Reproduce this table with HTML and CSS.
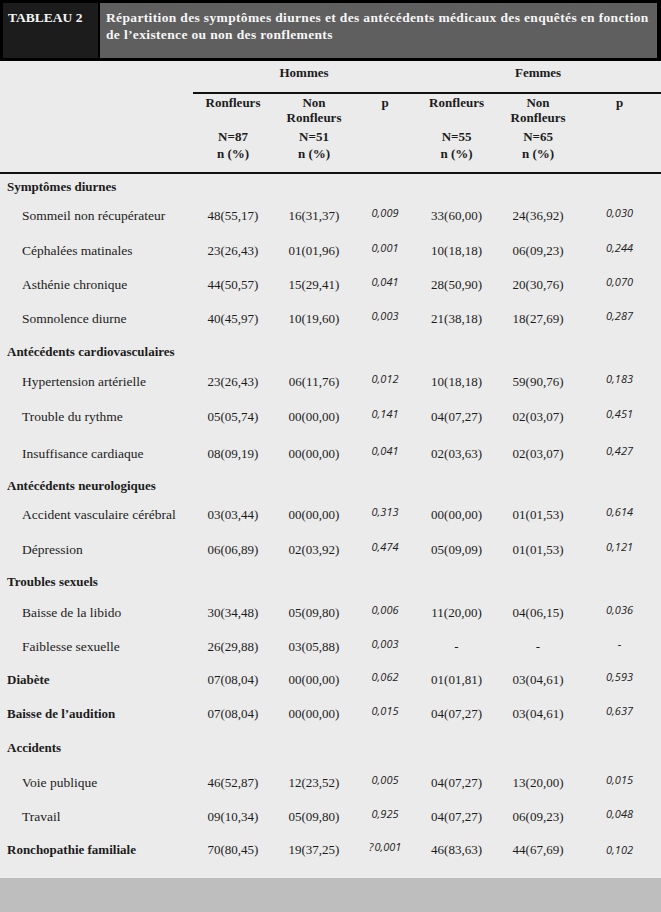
FILE: index.html
```html
<!DOCTYPE html>
<html lang="fr">
<head>
<meta charset="utf-8">
<title>Tableau 2</title>
<link rel="stylesheet" href="styles.css">
</head>
<body>
<div class="page">
  <header class="caption">
    <div class="tag">TABLEAU 2</div>
    <div class="title">Répartition des symptômes diurnes et des antécédents médicaux des enquêtés en fonction<br>de l’existence ou non des ronflements</div>
  </header>

  <table class="data">
    <colgroup>
      <col class="c-label"><col class="c-a"><col class="c-b"><col class="c-p"><col class="c-d"><col class="c-e"><col class="c-p2">
    </colgroup>
    <thead>
      <tr class="h-group">
        <th></th>
        <th colspan="3" class="grp">Hommes</th>
        <th colspan="3" class="grp">Femmes</th>
      </tr>
      <tr class="h-cols">
        <th></th>
        <th><div class="nm">Ronfleurs</div><div class="nn">N=87</div><div class="np">n (%)</div></th>
        <th><div class="nm">Non<br>Ronfleurs</div><div class="nn">N=51</div><div class="np">n (%)</div></th>
        <th><div class="nm">p</div></th>
        <th><div class="nm">Ronfleurs</div><div class="nn">N=55</div><div class="np">n (%)</div></th>
        <th><div class="nm">Non<br>Ronfleurs</div><div class="nn">N=65</div><div class="np">n (%)</div></th>
        <th><div class="nm">p</div></th>
      </tr>
    </thead>
    <tbody>
      <tr class="cat g4"><td colspan="7">Symptômes diurnes</td></tr>
      <tr class="g12"><td>Sommeil non récupérateur</td><td>48(55,17)</td><td>16(31,37)</td><td><span class="pv">0,009</span></td><td>33(60,00)</td><td>24(36,92)</td><td><span class="pv">0,030</span></td></tr>
      <tr class="g18"><td>Céphalées matinales</td><td>23(26,43)</td><td>01(01,96)</td><td><span class="pv">0,001</span></td><td>10(18,18)</td><td>06(09,23)</td><td><span class="pv">0,244</span></td></tr>
      <tr class="g17"><td>Asthénie chronique</td><td>44(50,57)</td><td>15(29,41)</td><td><span class="pv">0,041</span></td><td>28(50,90)</td><td>20(30,76)</td><td><span class="pv">0,070</span></td></tr>
      <tr class="g17"><td>Somnolence diurne</td><td>40(45,97)</td><td>10(19,60)</td><td><span class="pv">0,003</span></td><td>21(38,18)</td><td>18(27,69)</td><td><span class="pv">0,287</span></td></tr>

      <tr class="cat g16"><td colspan="7">Antécédents cardiovasculaires</td></tr>
      <tr class="g13"><td>Hypertension artérielle</td><td>23(26,43)</td><td>06(11,76)</td><td><span class="pv">0,012</span></td><td>10(18,18)</td><td>59(90,76)</td><td><span class="pv">0,183</span></td></tr>
      <tr class="g18"><td>Trouble du rythme</td><td>05(05,74)</td><td>00(00,00)</td><td><span class="pv">0,141</span></td><td>04(07,27)</td><td>02(03,07)</td><td><span class="pv">0,451</span></td></tr>
      <tr class="g20"><td>Insuffisance cardiaque</td><td>08(09,19)</td><td>00(00,00)</td><td><span class="pv">0,041</span></td><td>02(03,63)</td><td>02(03,07)</td><td><span class="pv">0,427</span></td></tr>

      <tr class="cat g15"><td colspan="7">Antécédents neurologiques</td></tr>
      <tr class="g12"><td>Accident vasculaire cérébral</td><td>03(03,44)</td><td>00(00,00)</td><td><span class="pv">0,313</span></td><td>00(00,00)</td><td>01(01,53)</td><td><span class="pv">0,614</span></td></tr>
      <tr class="g18"><td>Dépression</td><td>06(06,89)</td><td>02(03,92)</td><td><span class="pv">0,474</span></td><td>05(09,09)</td><td>01(01,53)</td><td><span class="pv">0,121</span></td></tr>

      <tr class="cat g15"><td colspan="7">Troubles sexuels</td></tr>
      <tr class="g14"><td>Baisse de la libido</td><td>30(34,48)</td><td>05(09,80)</td><td><span class="pv">0,006</span></td><td>11(20,00)</td><td>04(06,15)</td><td><span class="pv">0,036</span></td></tr>
      <tr class="g17"><td>Faiblesse sexuelle</td><td>26(29,88)</td><td>03(05,88)</td><td><span class="pv">0,003</span></td><td>-</td><td>-</td><td><span class="pv">-</span></td></tr>

      <tr class="cat-row g16"><td class="cat-lbl">Diabète</td><td>07(08,04)</td><td>00(00,00)</td><td><span class="pv">0,062</span></td><td>01(01,81)</td><td>03(04,61)</td><td><span class="pv">0,593</span></td></tr>
      <tr class="cat-row g17"><td class="cat-lbl">Baisse de l’audition</td><td>07(08,04)</td><td>00(00,00)</td><td><span class="pv">0,015</span></td><td>04(07,27)</td><td>03(04,61)</td><td><span class="pv">0,637</span></td></tr>

      <tr class="cat g17"><td colspan="7">Accidents</td></tr>
      <tr class="g18"><td>Voie publique</td><td>46(52,87)</td><td>12(23,52)</td><td><span class="pv">0,005</span></td><td>04(07,27)</td><td>13(20,00)</td><td><span class="pv">0,015</span></td></tr>
      <tr class="g17"><td>Travail</td><td>09(10,34)</td><td>05(09,80)</td><td><span class="pv">0,925</span></td><td>04(07,27)</td><td>06(09,23)</td><td><span class="pv">0,048</span></td></tr>

      <tr class="cat-row g16 last"><td class="cat-lbl">Ronchopathie familiale</td><td>70(80,45)</td><td>19(37,25)</td><td><span class="pv">?&#8202;0,001</span></td><td>46(83,63)</td><td>44(67,69)</td><td><span class="pv flat">0,102</span></td></tr>
    </tbody>
  </table>

  <div class="footer-bar"></div>
</div>
</body>
</html>
```

FILE: styles.css
```css
* { box-sizing: border-box; }

html, body {
  margin: 0;
  padding: 0;
}

body {
  background: #bebebe;
  font-family: "Liberation Serif", "Times New Roman", serif;
  color: #1c1c1c;
  font-size: 13px;
}

.page {
  width: 661px;
  height: 912px;
  display: flex;
  flex-direction: column;
  background: #ebebeb;
}

/* ---------- caption ---------- */
.caption {
  display: flex;
  gap: 2px;
  background: #000;
  border-style: solid;
  border-color: #000;
  border-width: 3px 4px 3px 3px;
  height: 61px;
  flex: none;
}

.tag {
  width: 95px;
  flex: none;
  background: #1c1c1c;
  color: #f4f4f4;
  font-weight: bold;
  font-size: 13.5px;
  line-height: 17px;
  padding: 6px 0 0 5px;
}

.title {
  flex: 1;
  min-width: 0;
  background: #5f5f5f;
  color: #f6f6f6;
  font-weight: bold;
  font-size: 13.5px;
  letter-spacing: 0.35px;
  line-height: 17px;
  padding: 6px 0 0 6px;
  white-space: nowrap;
}

/* ---------- table ---------- */
.data {
  width: 661px;
  border-collapse: collapse;
  table-layout: fixed;
  flex: none;
}

.c-label { width: 193px; }
.c-a { width: 80px; }
.c-b { width: 82px; }
.c-p { width: 60px; }
.c-d { width: 83px; }
.c-e { width: 80px; }
.c-p2 { width: 83px; }

.data th {
  font-weight: bold;
  text-align: center;
  vertical-align: top;
  padding: 0;
  line-height: 17px;
}

.h-group th {
  padding: 3px 0 11px;
}

.h-group th.grp {
  border-bottom: 2px solid #111;
}

.h-cols th {
  border-bottom: 2px solid #111;
  padding: 1px 0 10px;
}

.nm {
  line-height: 15px;
  min-height: 30px;
}

.nn {
  margin-top: 3px;
}

.data td {
  padding: 0;
  line-height: 17px;
  text-align: center;
  vertical-align: top;
  white-space: nowrap;
}

.data td:first-child {
  text-align: left;
  padding-left: 22px;
  font-size: 13.5px;
}

.data tr.cat td,
.data td.cat-lbl {
  font-weight: bold;
  font-size: 13px;
  padding-left: 7px;
  text-align: left;
}

.g4 td { padding-top: 4px !important; }
.g12 td { padding-top: 12px !important; }
.g13 td { padding-top: 13px !important; }
.g14 td { padding-top: 14px !important; }
.g15 td { padding-top: 15px !important; }
.g16 td { padding-top: 16px !important; }
.g17 td { padding-top: 17px !important; }
.g18 td { padding-top: 18px !important; }
.g20 td { padding-top: 20px !important; }

.last td { padding-bottom: 20px; }

.pv {
  font-family: "Open Sans", "DejaVu Sans", sans-serif;
  font-style: italic;
  font-size: 11px;
  line-height: 11px;
  vertical-align: 3px;
  color: #222;
}

.pv.flat { vertical-align: 0; }

.footer-bar {
  flex: 1;
  background: #bebebe;
}
```
